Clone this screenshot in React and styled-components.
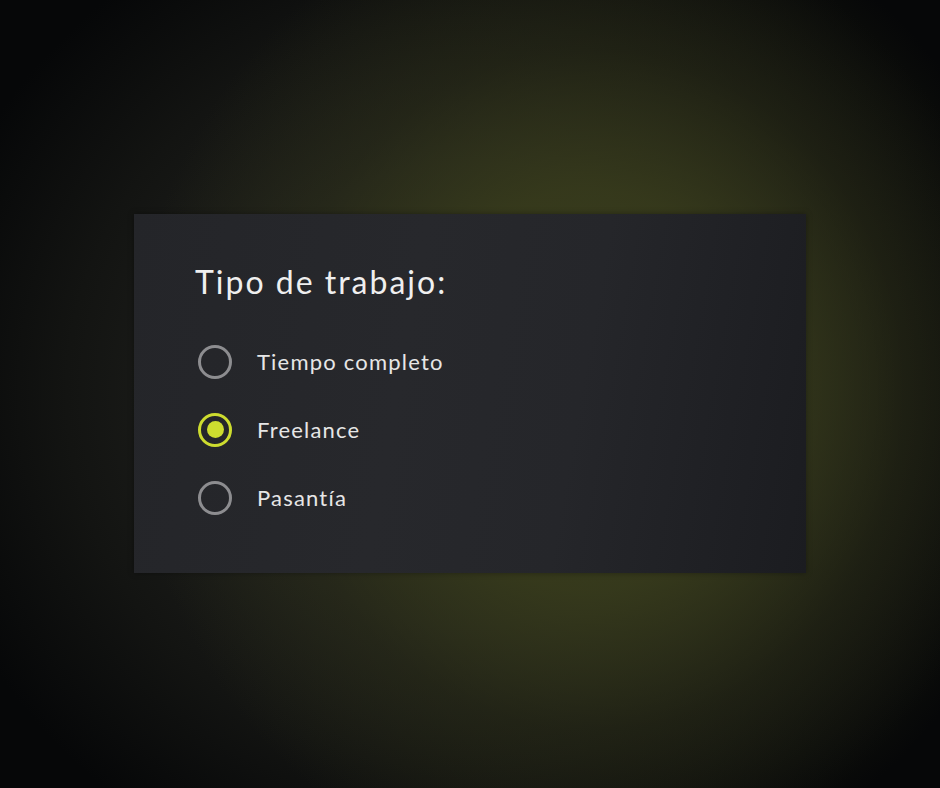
import React, { useState } from "react";
import styled, { createGlobalStyle } from "styled-components";

const Global = createGlobalStyle`
  html, body { margin: 0; padding: 0; }
  body {
    width: 940px;
    height: 788px;
    overflow: hidden;
    font-family: "Lato", "Noto Sans", sans-serif;
    background: #0a0b08;
  }
`;

const Stage = styled.main`
  width: 940px;
  height: 788px;
  display: flex;
  align-items: center;
  justify-content: center;
  background:
    radial-gradient(ellipse 460px 500px at 590px 390px, rgba(64, 68, 30, 0.95) 0%, rgba(60, 64, 28, 0.78) 40%, rgba(52, 55, 24, 0.38) 68%, rgba(40, 42, 20, 0) 100%),
    radial-gradient(ellipse 560px 520px at 470px 394px, #23241f 0%, #1d1e1b 45%, #131412 72%, #060708 100%);
`;

const Card = styled.fieldset`
  box-sizing: border-box;
  width: 672px;
  height: 359px;
  margin: 0;
  padding: 48px 61px 0;
  border: none;
  background: linear-gradient(100deg, #242529 0%, #27282c 40%, #25262a 65%, #1b1c20 100%);
  box-shadow: 0 0 6px rgba(0, 0, 0, 0.35);
  display: flex;
  flex-direction: column;
  position: relative;
  top: -1px;
`;

const Legend = styled.h2`
  margin: 0 0 43px;
  font-size: 32px;
  font-weight: 400;
  line-height: 40px;
  color: #efefef;
  letter-spacing: 2px;
`;

const List = styled.div`
  display: flex;
  flex-direction: column;
  gap: 34px;
`;

const Row = styled.label`
  display: flex;
  align-items: center;
  gap: 25px;
  cursor: pointer;
  height: 34px;
  padding-left: 3px;
`;

const HiddenInput = styled.input`
  position: absolute;
  opacity: 0;
  width: 0;
  height: 0;
  margin: 0;
`;

const Dot = styled.span`
  box-sizing: border-box;
  width: 34px;
  height: 34px;
  border-radius: 50%;
  border: 3px solid ${(p) => (p.$checked ? "#cddc2f" : "#8d8d90")};
  display: flex;
  align-items: center;
  justify-content: center;
  flex-shrink: 0;
  &::after {
    content: "";
    width: 17px;
    height: 17px;
    border-radius: 50%;
    background: #cddc2f;
    display: ${(p) => (p.$checked ? "block" : "none")};
  }
`;

const Label = styled.span`
  font-size: 22px;
  color: #e6e6e6;
  letter-spacing: 1.2px;
`;

const options = ["Tiempo completo", "Freelance", "Pasantía"];

export default function App() {
  const [value, setValue] = useState("Freelance");
  return (
    <>
      <Global />
      <Stage>
        <Card>
          <Legend>Tipo de trabajo:</Legend>
          <List>
            {options.map((o) => (
              <Row key={o}>
                <HiddenInput
                  type="radio"
                  name="tipo"
                  checked={value === o}
                  onChange={() => setValue(o)}
                />
                <Dot $checked={value === o} />
                <Label>{o}</Label>
              </Row>
            ))}
          </List>
        </Card>
      </Stage>
    </>
  );
}
